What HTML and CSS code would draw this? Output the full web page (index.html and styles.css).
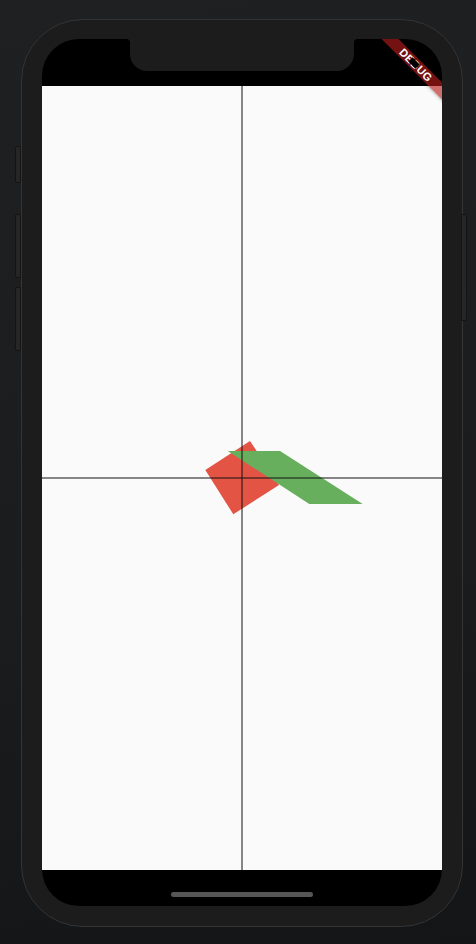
FILE: index.html
```html
<!DOCTYPE html>
<html>
<head>
<meta charset="utf-8">
<link rel="stylesheet" href="styles.css">
</head>
<body>
<div class="device">
  <div class="btn btn-l1"></div>
  <div class="btn btn-l2"></div>
  <div class="btn btn-l3"></div>
  <div class="btn btn-r1"></div>
  <div class="screen">
    <div class="statusbar"><div class="notch"></div></div>
    <div class="content">
      <svg class="canvas" width="400" height="784" viewBox="0 0 400 784">
        <polygon points="208,355 237,399 191.3,428.3 163.3,384" fill="#e35444"/>
        <polygon points="185.7,365 238,365 320.7,418 267.3,418" fill="#67ae5d"/>
        <line x1="200" y1="0" x2="200" y2="784" stroke="#111" stroke-width="1"/>
        <line x1="0" y1="392" x2="400" y2="392" stroke="#111" stroke-width="1"/>
      </svg>
    </div>
    <div class="homebar"><div class="home-indicator"></div></div>
    <div class="banner"><span class="banner-text">DEBUG</span></div>
    <div class="banner-mask"></div>
  </div>
</div>
</body>
</html>
```

FILE: styles.css
```css
html, body {
  margin: 0;
  padding: 0;
}
body {
  width: 476px;
  height: 944px;
  overflow: hidden;
  background: linear-gradient(170deg, #1f2022 0%, #1b1c1e 60%, #141517 100%);
  font-family: "Liberation Sans", Arial, sans-serif;
  box-sizing: border-box;
  padding: 19px 0 0 21px;
}
.device {
  position: relative;
  box-sizing: border-box;
  width: 442px;
  height: 908px;
  border: 1px solid #333436;
  border-radius: 62px;
  background: #1c1c1c;
  padding: 19px 20px 20px 20px;
}
.btn {
  position: absolute;
  width: 6px;
  background: #262626;
  border: 1px solid #141414;
  box-sizing: border-box;
  border-radius: 2px 0 0 2px;
}
.btn-l1 { left: -7px; top: 126px; height: 37px; }
.btn-l2 { left: -7px; top: 194px; height: 64px; }
.btn-l3 { left: -7px; top: 267px; height: 64px; }
.btn-r1 { left: 439px; top: 194px; height: 107px; width: 6px; border-radius: 0 2px 2px 0; }

.screen {
  position: relative;
  width: 400px;
  height: 867px;
  background: #000;
  border-radius: 37px;
  overflow: hidden;
  display: flex;
  flex-direction: column;
}
.statusbar {
  height: 47px;
  flex: none;
  display: flex;
  justify-content: center;
}
.notch {
  position: relative;
  width: 224px;
  height: 32px;
  background: #1c1c1c;
  border-radius: 0 0 17px 17px;
}
.notch::before, .notch::after {
  content: "";
  position: absolute;
  top: 0;
  width: 4px;
  height: 4px;
}
.notch::before {
  left: -4px;
  background: radial-gradient(circle at 0 100%, transparent 4px, #1c1c1c 4.5px);
}
.notch::after {
  right: -4px;
  background: radial-gradient(circle at 100% 100%, transparent 4px, #1c1c1c 4.5px);
}
.content {
  height: 784px;
  flex: none;
  background: #fafafa;
}
.canvas {
  display: block;
}
.homebar {
  flex: 1;
  display: flex;
  justify-content: center;
  padding-top: 22px;
  box-sizing: border-box;
}
.home-indicator {
  width: 142px;
  height: 5px;
  border-radius: 3px;
  background: #565656;
}
.banner {
  position: absolute;
  left: 314px;
  top: 20px;
  width: 120px;
  height: 12px;
  background: rgba(183, 28, 28, 0.63);
  transform: rotate(45deg);
  display: flex;
  align-items: center;
  justify-content: center;
  box-shadow: 0 1px 3px rgba(0, 0, 0, 0.25);
}
.banner-text {
  color: #fff;
  font-family: "Liberation Sans", Arial, sans-serif;
  font-weight: bold;
  font-size: 11px;
  line-height: 12px;
  letter-spacing: 0.4px;
}
.banner-mask {
  position: absolute;
  left: 367px;
  top: 21px;
  width: 10px;
  height: 6px;
  background: #000;
  transform: rotate(45deg);
}
```
